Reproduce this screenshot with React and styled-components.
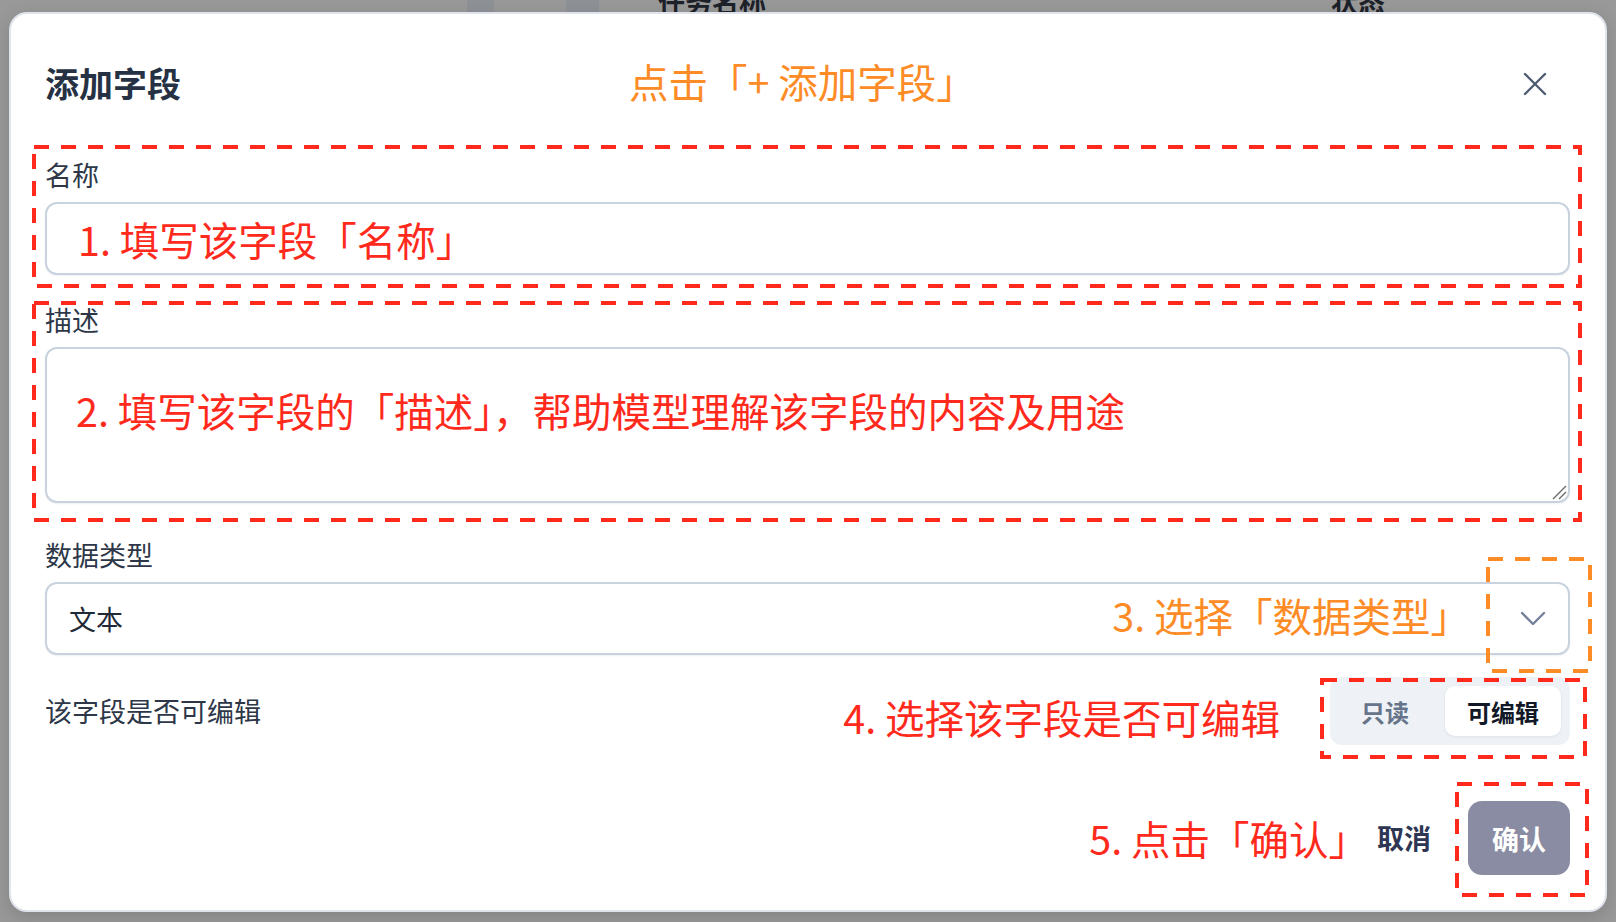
import styled, { createGlobalStyle } from "styled-components";

const GlobalStyle = createGlobalStyle`
  html, body {
    margin: 0;
    padding: 0;
    background: #999999;
    font-family: "Noto Sans CJK SC", "Noto Sans", sans-serif;
  }
  * {
    box-sizing: border-box;
  }
`;

const RED = "#ff2a1c";
const ORANGE = "#fd8b26";

const Backdrop = styled.div`
  width: 1616px;
  height: 922px;
  overflow: hidden;
  background: #999999;
`;

const PageStrip = styled.div`
  height: 12px;
  overflow: hidden;
  display: flex;
  align-items: flex-end;
`;

const StripBox = styled.div`
  width: ${(p) => p.$w}px;
  height: 22px;
  margin-left: ${(p) => p.$left}px;
  margin-bottom: -6px;
  border-radius: 6px;
  background: #8e9196;
`;

const StripText = styled.div`
  margin-left: ${(p) => p.$left}px;
  font-size: 27px;
  line-height: 27px;
  font-weight: 700;
  color: #1d2129;
  margin-bottom: -3px;
  white-space: nowrap;
`;

const Modal = styled.div`
  position: relative;
  margin-left: 9px;
  width: 1598px;
  height: 900px;
  background: #ffffff;
  border: 2px solid #dfe4ec;
  border-radius: 18px;
  padding: 34px 35px 0 34px;
  box-shadow: 0 6px 20px rgba(0, 0, 0, 0.15);
`;

const Header = styled.div`
  height: 72px;
  display: flex;
  align-items: center;
`;

const Title = styled.h2`
  margin: 0 0 2px;
  font-size: 34px;
  line-height: 44px;
  font-weight: 700;
  color: #263244;
`;

const Note = styled.span`
  font-size: 39.5px;
  line-height: 52px;
  font-weight: 400;
  color: ${(p) => (p.$orange ? ORANGE : RED)};
  white-space: nowrap;
  margin-left: ${(p) => p.$left || 0}px;
  margin-right: ${(p) => p.$right || 0}px;
  position: relative;
  top: ${(p) => p.$shift || 0}px;
`;

const CloseButton = styled.button`
  margin-left: auto;
  margin-right: 23px;
  width: 24px;
  height: 24px;
  padding: 0;
  border: none;
  background: none;
  display: flex;
  align-items: center;
  justify-content: center;
  color: #4f5d72;
`;

const Form = styled.div`
  margin-top: 35px;
  display: flex;
  flex-direction: column;
`;

const Field = styled.div`
  margin-top: ${(p) => p.$gap || 0}px;
  display: flex;
  flex-direction: column;
`;

const Label = styled.label`
  font-size: 27px;
  line-height: 40px;
  color: #2d3748;
  margin-bottom: 7px;
`;

const InputBox = styled.div`
  height: 73px;
  border: 2px solid #c9d3df;
  border-radius: 12px;
  background: #fff;
  box-shadow: 0 1px 2px rgba(15, 23, 42, 0.06);
  display: flex;
  align-items: center;
  padding: 0 ${(p) => p.$px || 22}px;
`;

const AreaWrap = styled.div`
  position: relative;
  display: flex;
  flex-direction: column;
`;

const TextArea = styled.textarea`
  height: 156px;
  border: 2px solid #c9d3df;
  border-radius: 12px;
  background: #fff;
  box-shadow: 0 1px 2px rgba(15, 23, 42, 0.06);
  padding: 35px 29px 0;
  font-family: inherit;
  font-size: 39.5px;
  line-height: 52px;
  color: ${RED};
  resize: none;
  outline: none;
`;

const Grip = styled.svg`
  position: absolute;
  right: 3px;
  bottom: 3px;
`;

const SelectValue = styled.span`
  font-size: 27px;
  line-height: 40px;
  color: #1f2937;
  flex: 1;
`;

const Row = styled.div`
  margin-top: 22px;
  height: 68px;
  display: flex;
  align-items: center;
`;

const RowLabel = styled.span`
  font-size: 27px;
  line-height: 40px;
  color: #2d3748;
  margin-right: auto;
`;

const Segmented = styled.div`
  display: flex;
  align-items: center;
  gap: 14px;
  padding: 9px;
  height: 68px;
  border-radius: 12px;
  background: #eef2f7;
`;

const Segment = styled.button`
  height: 50px;
  padding: 0 22px;
  border: none;
  border-radius: 10px;
  font-family: inherit;
  font-size: 24px;
  font-weight: ${(p) => (p.$active ? 700 : 600)};
  color: ${(p) => (p.$active ? "#111827" : "#667489")};
  background: ${(p) => (p.$active ? "#ffffff" : "transparent")};
  box-shadow: ${(p) => (p.$active ? "0 1px 3px rgba(15, 23, 42, 0.08)" : "none")};
`;

const Footer = styled.div`
  margin-top: 56px;
  display: flex;
  align-items: center;
  justify-content: flex-end;
`;

const CancelButton = styled.button`
  margin-left: 9px;
  padding: 0;
  border: none;
  background: none;
  font-family: inherit;
  font-size: 27px;
  line-height: 40px;
  font-weight: 700;
  color: #2e3654;
`;

const ConfirmButton = styled.button`
  margin-left: 37px;
  width: 102px;
  height: 74px;
  border: none;
  border-radius: 14px;
  background: #8a8ca3;
  font-family: inherit;
  font-size: 27px;
  font-weight: 700;
  color: #ffffff;
`;

const CalloutFrame = styled.div`
  position: absolute;
  left: ${(p) => p.$x}px;
  top: ${(p) => p.$y}px;
  width: ${(p) => p.$w}px;
  height: ${(p) => p.$h}px;
  pointer-events: none;
`;

const Callout = ({ x, y, w, h, orange }) => (
  <CalloutFrame $x={x} $y={y} $w={w} $h={h}>
    <svg width={w} height={h} viewBox={`0 0 ${w} ${h}`}>
      <rect
        x="2"
        y="2"
        width={w - 4}
        height={h - 4}
        fill="none"
        stroke={orange ? ORANGE : RED}
        strokeWidth="4"
        strokeDasharray="15 12"
      />
    </svg>
  </CalloutFrame>
);

const CloseIcon = () => (
  <svg width="24" height="24" viewBox="0 0 24 24" fill="none">
    <path d="M2 2 L22 22 M22 2 L2 22" stroke="currentColor" strokeWidth="2.4" strokeLinecap="round" />
  </svg>
);

const Chevron = () => (
  <svg width="26" height="16" viewBox="0 0 26 16" fill="none" style={{ marginLeft: 50 }}>
    <path d="M2 2 L13 13 L24 2" stroke="#74819a" strokeWidth="2.4" strokeLinecap="round" strokeLinejoin="round" />
  </svg>
);

export default function App() {
  return (
    <Backdrop>
      <GlobalStyle />
      <PageStrip>
        <StripBox $left={467} $w={27} />
        <StripBox $left={72} $w={33} />
        <StripText $left={59}>任务名称</StripText>
        <StripText $left={565}>状态</StripText>
      </PageStrip>
      <Modal>
        <Header>
          <Title>添加字段</Title>
          <Note $orange $left={448} $shift={-3}>点击「+ 添加字段」</Note>
          <CloseButton aria-label="关闭">
            <CloseIcon />
          </CloseButton>
        </Header>

        <Form>
          <Field>
            <Label>名称</Label>
            <InputBox $px={31}>
              <Note>1. 填写该字段「名称」</Note>
            </InputBox>
          </Field>

          <Field $gap={25}>
            <Label>描述</Label>
            <AreaWrap>
              <TextArea
                readOnly
                defaultValue="2. 填写该字段的「描述」，帮助模型理解该字段的内容及用途"
              />
              <Grip width="16" height="16" viewBox="0 0 16 16">
                <path d="M15 2 L2 15 M15 8 L8 15" stroke="#6b6b6b" strokeWidth="1.4" />
              </Grip>
            </AreaWrap>
          </Field>

          <Field $gap={32}>
            <Label>数据类型</Label>
            <InputBox>
              <SelectValue>文本</SelectValue>
              <Note $orange $shift={-4}>3. 选择「数据类型」</Note>
              <Chevron />
            </InputBox>
          </Field>

          <Row>
            <RowLabel>该字段是否可编辑</RowLabel>
            <Note $right={50} $shift={6}>4. 选择该字段是否可编辑</Note>
            <Segmented>
              <Segment>只读</Segment>
              <Segment $active>可编辑</Segment>
            </Segmented>
          </Row>

          <Footer>
            <Note>5. 点击「确认」</Note>
            <CancelButton>取消</CancelButton>
            <ConfirmButton>确认</ConfirmButton>
          </Footer>
        </Form>

        <Callout x={21} y={131} w={1550} h={143} />
        <Callout x={21} y={287} w={1550} h={221} />
        <Callout orange x={1475} y={543} w={106} h={116} />
        <Callout x={1309} y={664} w={267} h={81} />
        <Callout x={1444} y={768} w={134} h={115} />
      </Modal>
    </Backdrop>
  );
}
